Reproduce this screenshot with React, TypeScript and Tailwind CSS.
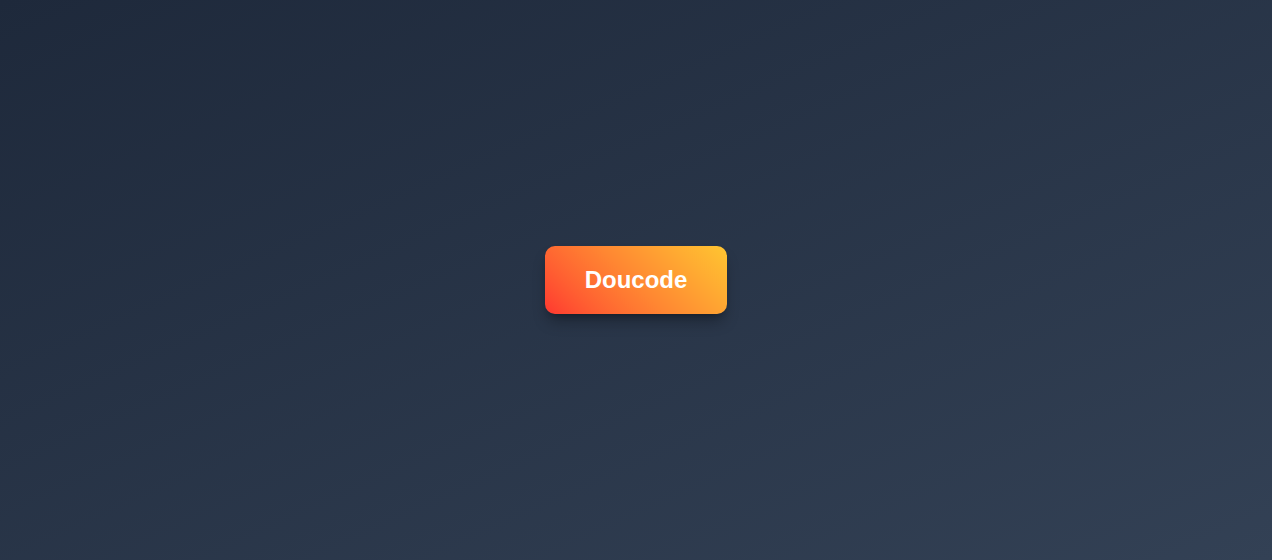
export default function App() {
  return (
    <main className="min-h-screen h-[560px] flex items-center justify-center bg-gradient-to-br from-[#1e293b] to-[#334155] font-['Liberation_Sans',Arial,sans-serif]">
      <button className="px-10 py-[18px] rounded-[10px] bg-linear-45 from-[#ff3630] to-[#ffc531] text-white text-2xl font-bold leading-8 shadow-lg shadow-black/30">
        Doucode
      </button>
    </main>
  );
}
